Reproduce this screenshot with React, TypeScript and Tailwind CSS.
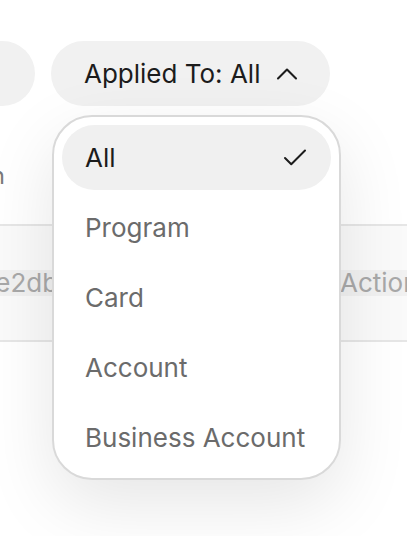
import { Check, ChevronUp } from 'lucide-react'

const options = ['All', 'Program', 'Card', 'Account', 'Business Account']

export default function App() {
  const selected = 'All'

  return (
    <div className="relative min-h-[536px] overflow-hidden bg-white font-['Inter',sans-serif]">
      {/* Filters */}
      <div className="flex gap-4 pt-[41px]">
        <button className="-ml-[150px] h-[65px] w-[185px] shrink-0 rounded-full bg-[#f1f1f1]" />
        <div className="relative shrink-0">
          <button className="flex h-[65px] w-[279px] items-center gap-[18px] rounded-full bg-[#f1f1f1] pl-[33px] pr-[33px] text-[26px] text-[#1c1c1c]">
            <span className="whitespace-nowrap">Applied To: All</span>
            <ChevronUp size={36} strokeWidth={1.4} className="-mx-[9px] shrink-0" />
          </button>

          {/* Menu */}
          <div className="absolute left-[1px] top-[74px] z-10 flex w-[289px] flex-col gap-[5px] rounded-[40px] border-2 border-[#d9d9d9] bg-white px-[8px] pb-[8px] pt-[8px] shadow-[0_24px_70px_rgba(0,0,0,0.1)]">
            {options.map(option => (
              <div
                key={option}
                className={`flex h-[65px] items-center justify-between rounded-full pl-[23px] pr-[21px] text-[26px] ${
                  option === selected ? 'bg-[#f0f0f0] text-[#1c1c1c]' : 'text-[#6b6b6b]'
                }`}
              >
                <span className="whitespace-nowrap">{option}</span>
                {option === selected && <Check size={30} strokeWidth={1.6} className="text-[#1c1c1c]" />}
              </div>
            ))}
          </div>
        </div>
      </div>

      {/* Label */}
      <div className="mt-[56px] flex w-[5px] justify-end whitespace-nowrap text-[24px] leading-[28px] text-[#7a7a7a]">
        Description
      </div>

      {/* Table */}
      <div className="mt-[34px] border-y-2 border-[#e6e6e6]">
        <div className="flex h-[114px] items-center bg-[#fafafa]">
          <div className="flex w-[80px] shrink-0 justify-end whitespace-nowrap">
            <span className="bg-[#f1f1f1] pr-[6px] text-[26px] leading-[26px] text-[#a8a8a8]">9f1ce2db5</span>
          </div>
          <span className="ml-[258px] whitespace-nowrap bg-[#f1f1f1] pl-[2px] text-[26px] leading-[26px] text-[#a8a8a8]">
            Actions
          </span>
        </div>
      </div>
    </div>
  )
}
